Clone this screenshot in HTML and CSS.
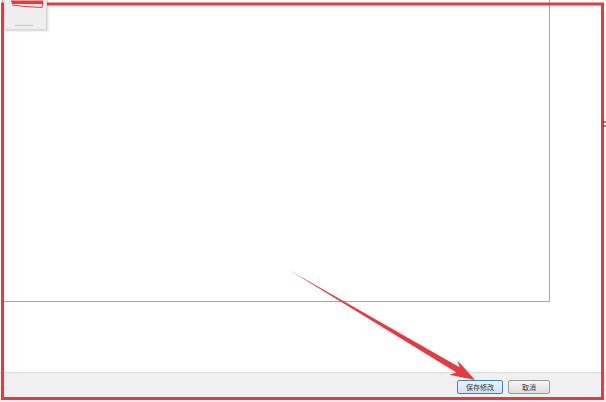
FILE: index.html
```html
<!DOCTYPE html>
<html lang="zh-CN">
<head>
<meta charset="utf-8">
<title>保存修改</title>
<link rel="stylesheet" href="styles.css">
</head>
<body>
<div class="page">
  <main class="content">
    <section class="panel"></section>
  </main>
  <footer class="footer">
    <button class="btn btn-primary" type="button">保存修改</button>
    <button class="btn" type="button">取消</button>
  </footer>
</div>

<svg class="annot" width="606" height="402" viewBox="0 0 606 402">
  <rect x="2.5" y="4" width="600" height="394.5" fill="none" stroke="#e8393e" stroke-width="3"/>
  <polygon points="289,270 456.5,372.5 449.4,374.7 475,380 457.6,360.4 459.6,367.2" fill="#e8393e"/>
  <path d="M603 122 H606 M603 126 H606" stroke="#222" stroke-width="1"/>
</svg>

<div class="thumb">
  <svg class="thumb-mark" width="43" height="12" viewBox="0 0 43 12">
    <path d="M6 0.5 L38 0.5 L38 4 L7 4 Z" fill="#e8393e"/>
    <path d="M7 5 L20 6.5 L37 7.5 L38 2" fill="none" stroke="#e8393e" stroke-width="1"/>
  </svg>
  <span class="thumb-line"></span>
</div>
</body>
</html>
```

FILE: styles.css
```css
html, body {
  margin: 0;
  padding: 0;
  background: #ffffff;
  font-family: "Noto Sans CJK SC", "Liberation Sans", sans-serif;
}

.page {
  width: 606px;
  height: 402px;
  display: flex;
  flex-direction: column;
  overflow: hidden;
}

.content {
  flex: 1;
  display: flex;
  flex-direction: column;
  padding-left: 2px;
}

.panel {
  width: 548px;
  height: 302px;
  background: #ffffff;
  border: 1px solid #a7a7a7;
  border-top: none;
  box-sizing: border-box;
}

.footer {
  height: 30px;
  box-sizing: border-box;
  background: #f0f0f0;
  border-top: 1px solid #dcdcdc;
  display: flex;
  justify-content: flex-end;
  align-items: flex-start;
  gap: 5px;
  padding: 7px 56px 0 0;
}

.btn {
  height: 14px;
  width: 42px;
  padding: 0;
  margin: 0;
  font-family: "Noto Sans CJK SC", sans-serif;
  font-size: 7px;
  line-height: 12px;
  color: #333;
  border: 1px solid #9a9a9a;
  border-radius: 2px;
  background: linear-gradient(#f6f6f6, #dedede);
}

.btn-primary {
  width: 46px;
  border-color: #3b84c4;
  background: linear-gradient(#eaf4fb, #cfe3f2);
}

.thumb {
  position: absolute;
  left: 4px;
  top: -2px;
  width: 43px;
  height: 32px;
  box-sizing: border-box;
  background: #eeeeee;
  border: 1px solid #dadada;
  box-shadow: 1px 1px 2px rgba(0, 0, 0, 0.18);
}

.thumb-mark {
  position: absolute;
  left: 0;
  top: 1px;
}

.thumb-line {
  position: absolute;
  left: 10px;
  top: 26px;
  width: 18px;
  height: 1px;
  background: #c8c8c8;
}

.annot {
  position: absolute;
  left: 0;
  top: 0;
  pointer-events: none;
}
```
